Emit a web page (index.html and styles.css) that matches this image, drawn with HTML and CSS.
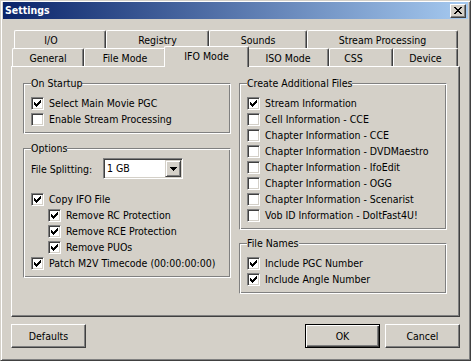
FILE: index.html
```html
<!DOCTYPE html>
<html lang="en">
<head>
    <meta charset="UTF-8">
    <meta name="viewport" content="width=device-width, initial-scale=1.0">
    <title>Settings</title>
    <link rel="stylesheet" href="styles.css">
</head>
<body>
    <div class="window">
        <div class="titlebar">
            <span class="title">Settings</span>
            <span class="close-btn">
                <svg width="8" height="7" viewBox="0 0 8 7" shape-rendering="crispEdges">
                    <path d="M0 0h2v1H0z M6 0h2v1H6z M1 1h2v1H1z M5 1h2v1H5z M2 2h4v1H2z M3 3h2v1H3z M2 4h4v1H2z M1 5h2v1H1z M5 5h2v1H5z M0 6h2v1H0z M6 6h2v1H6z" fill="#000"/>
                </svg>
            </span>
        </div>

        <div class="dialog-body">
            <div class="tabs">
                <div class="tab-row back">
                    <div class="tab tab-io">I/O</div>
                    <div class="tab tab-registry">Registry</div>
                    <div class="tab tab-sounds">Sounds</div>
                    <div class="tab tab-stream">Stream Processing</div>
                </div>
                <div class="tab-row front">
                    <div class="tab tab-general">General</div>
                    <div class="tab tab-file">File Mode</div>
                    <div class="tab tab-ifo selected">IFO Mode</div>
                    <div class="tab tab-iso">ISO Mode</div>
                    <div class="tab tab-css">CSS</div>
                    <div class="tab tab-device">Device</div>
                </div>
            </div>

            <div class="tab-panel">
                <div class="column">
                    <fieldset class="group">
                        <legend>On Startup</legend>
                        <div class="check-row"><span class="check checked"></span>Select Main Movie PGC</div>
                        <div class="check-row"><span class="check"></span>Enable Stream Processing</div>
                    </fieldset>

                    <fieldset class="group options">
                        <legend>Options</legend>
                        <div class="field-row">
                            <span class="field-label">File Splitting:</span>
                            <div class="combo">
                                <span class="combo-value">1 GB</span>
                                <span class="combo-btn">
                                    <svg width="7" height="4" viewBox="0 0 7 4" shape-rendering="crispEdges">
                                        <path d="M0 0h7v1H0z M1 1h5v1H1z M2 2h3v1H2z M3 3h1v1H3z" fill="#000"/>
                                    </svg>
                                </span>
                            </div>
                        </div>
                        <div class="check-row spaced"><span class="check checked"></span>Copy IFO File</div>
                        <div class="check-row sub"><span class="check checked"></span>Remove RC Protection</div>
                        <div class="check-row sub"><span class="check checked"></span>Remove RCE Protection</div>
                        <div class="check-row sub"><span class="check checked"></span>Remove PUOs</div>
                        <div class="check-row"><span class="check checked"></span>Patch M2V Timecode (00:00:00:00)</div>
                    </fieldset>
                </div>

                <div class="column">
                    <fieldset class="group">
                        <legend>Create Additional Files</legend>
                        <div class="check-row"><span class="check checked"></span>Stream Information</div>
                        <div class="check-row"><span class="check"></span>Cell Information - CCE</div>
                        <div class="check-row"><span class="check"></span>Chapter Information - CCE</div>
                        <div class="check-row"><span class="check"></span>Chapter Information - DVDMaestro</div>
                        <div class="check-row"><span class="check"></span>Chapter Information - IfoEdit</div>
                        <div class="check-row"><span class="check"></span>Chapter Information - OGG</div>
                        <div class="check-row"><span class="check"></span>Chapter Information - Scenarist</div>
                        <div class="check-row"><span class="check"></span>Vob ID Information - DoItFast4U!</div>
                    </fieldset>

                    <fieldset class="group file-names">
                        <legend>File Names</legend>
                        <div class="check-row"><span class="check checked"></span>Include PGC Number</div>
                        <div class="check-row"><span class="check checked"></span>Include Angle Number</div>
                    </fieldset>
                </div>
            </div>

            <div class="button-bar">
                <button type="button" class="btn">Defaults</button>
                <div class="spacer"></div>
                <button type="button" class="btn default">OK</button>
                <button type="button" class="btn">Cancel</button>
            </div>
        </div>
    </div>
</body>
</html>
```

FILE: styles.css
```css
* {
    box-sizing: border-box;
}

body {
    margin: 0;
    background-color: #d4d0c8;
    font-family: "DejaVu Sans Condensed", "Liberation Sans", sans-serif;
    font-size: 10.5px;
    color: #000;
}

.window {
    width: 471px;
    height: 361px;
    background-color: #d4d0c8;
    border: 1px solid;
    border-color: #d4d0c8 #404040 #404040 #d4d0c8;
    box-shadow: inset 1px 1px #fff, inset -1px -1px #808080;
    padding: 1px 2px 2px 2px;
    display: flex;
    flex-direction: column;
}

/* title bar */
.titlebar {
    height: 17px;
    background: linear-gradient(to right, #0a246a, #a6caf0);
    display: flex;
    align-items: flex-start;
    padding-left: 2px;
}

.title {
    color: #fff;
    font-weight: bold;
    line-height: 17px;
    flex: 1;
}

.close-btn {
    width: 16px;
    height: 14px;
    margin-top: 2px;
    margin-right: 2px;
    background-color: #d4d0c8;
    border: 1px solid;
    border-color: #fff #404040 #404040 #fff;
    box-shadow: inset -1px -1px #808080;
    padding: 2px 0 0 3px;
    display: flex;
    align-items: flex-start;
}

.close-btn svg {
    display: block;
}

.dialog-body {
    flex: 1;
    padding: 11px 8px 0 8px;
    display: flex;
    flex-direction: column;
}

/* tabs */
.tab-row {
    display: flex;
}

.tab-row.back {
    height: 18px;
    margin-left: 3px;
    margin-bottom: -2px;
}

.tab-row.front {
    height: 20px;
    margin-left: 1px;
    align-items: flex-end;
}

.tab {
    height: 18px;
    background-color: #d4d0c8;
    border-top: 1px solid #fff;
    border-left: 1px solid #fff;
    border-right: 1px solid #404040;
    border-radius: 2px 2px 0 0;
    box-shadow: inset -1px 0 #808080;
    text-align: center;
    line-height: 14px;
    padding-top: 2px;
    white-space: nowrap;
}

.tab.selected {
    position: relative;
    z-index: 1;
    height: 21px;
    margin: 0 -2px -1px -2px;
}

.tab-io { width: 92px; padding-right: 18px; }
.tab-registry { width: 103px; }
.tab-sounds { width: 98px; }
.tab-stream { width: 151px; }
.tab-general { width: 72px; }
.tab-file { width: 82px; }
.tab-ifo { width: 85px; }
.tab-iso { width: 82px; }
.tab-css { width: 64px; padding-right: 15px; }
.tab-device { width: 65px; }

.tab-panel {
    height: 251px;
    border: 1px solid;
    border-color: #fff #404040 #404040 #fff;
    box-shadow: inset -1px -1px #808080;
    padding: 10px 12px 0 11px;
    display: flex;
    gap: 8px;
}

.column {
    width: 208px;
    display: flex;
    flex-direction: column;
}

/* group boxes */
.group {
    margin: 0;
    min-width: 0;
    padding: 6px 7px 6px 7px;
    border: 1px solid;
    border-color: #808080 #fff #fff #808080;
    box-shadow: inset 1px 1px #fff, inset -1px -1px #808080;
}

.group legend {
    padding: 0;
    line-height: 12px;
    background-color: #d4d0c8;
}

.group.options {
    margin-top: 8px;
}

.group.file-names {
    margin-top: 7px;
}

.check-row {
    display: flex;
    align-items: flex-start;
    height: 16px;
    line-height: 16px;
    white-space: nowrap;
}

.check-row.sub {
    padding-left: 17px;
}

.check-row.spaced {
    margin-top: 12px;
}

.check {
    position: relative;
    flex: none;
    width: 13px;
    height: 13px;
    margin-top: 2px;
    margin-right: 5px;
    background-color: #fff;
    border: 1px solid;
    border-color: #808080 #fff #fff #808080;
    box-shadow: inset 1px 1px #404040, inset -1px -1px #d4d0c8;
}

.check.checked::after {
    content: "";
    position: absolute;
    left: 2px;
    top: 4px;
    width: 1px;
    height: 3px;
    background-color: #000;
    box-shadow: 1px 1px #000, 2px 2px #000, 3px 1px #000, 4px 0 #000, 5px -1px #000, 6px -2px #000;
}

/* combo box */
.field-row {
    display: flex;
    align-items: center;
    height: 21px;
    margin-top: -2px;
}

.field-label {
    width: 72px;
}

.combo {
    width: 80px;
    height: 21px;
    background-color: #fff;
    border: 1px solid;
    border-color: #808080 #fff #fff #808080;
    box-shadow: inset 1px 1px #404040, inset -1px -1px #d4d0c8;
    padding: 1px;
    display: flex;
}

.combo-value {
    flex: 1;
    padding-left: 2px;
    line-height: 17px;
}

.combo-btn {
    width: 16px;
    height: 17px;
    background-color: #d4d0c8;
    border: 1px solid;
    border-color: #d4d0c8 #404040 #404040 #d4d0c8;
    box-shadow: inset 1px 1px #fff, inset -1px -1px #808080;
    display: flex;
    align-items: center;
    justify-content: center;
}

.combo-btn svg {
    display: block;
}

/* buttons */
.button-bar {
    display: flex;
    gap: 5px;
    margin-top: 7px;
}

.spacer {
    flex: 1;
}

.btn {
    width: 75px;
    height: 24px;
    font: inherit;
    color: #000;
    background-color: #d4d0c8;
    border: 1px solid;
    border-color: #fff #404040 #404040 #fff;
    box-shadow: inset -1px -1px #808080;
    padding: 0;
}

.btn.default {
    border-color: #000;
    box-shadow: inset 1px 1px #fff, inset -1px -1px #404040, inset -2px -2px #808080;
}
```
